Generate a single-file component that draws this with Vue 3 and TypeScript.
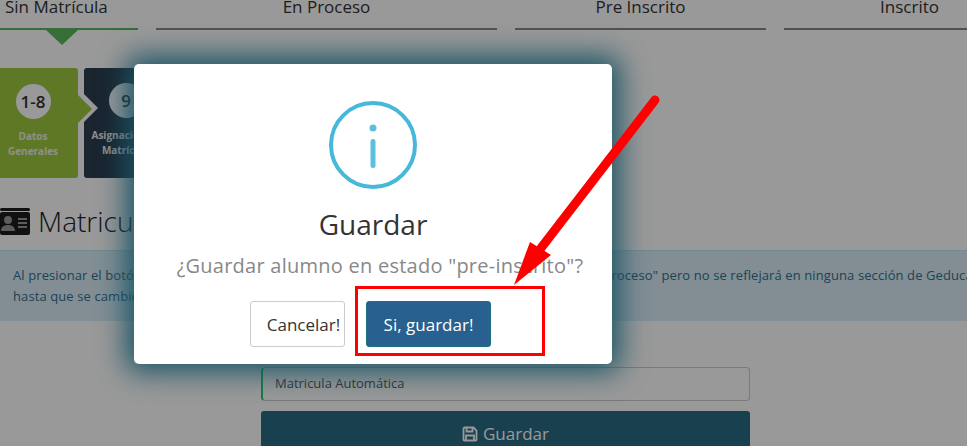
<script setup lang="ts">
interface Tab {
  label: string
  width: number
  active?: boolean
}

const tabs: Tab[] = [
  { label: 'Sin Matrícula', width: 138, active: true },
  { label: 'En Proceso', width: 341 },
  { label: 'Pre Inscrito', width: 251 },
  { label: 'Inscrito', width: 251 }
]
</script>

<template>
  <div class="page">
    <div class="tabs">
      <div v-for="tab in tabs" :key="tab.label" class="tab" :class="{ active: tab.active }" :style="{ flexBasis: `${tab.width}px` }">
        <span class="tab-label">{{ tab.label }}</span>
      </div>
    </div>

    <div class="steps">
      <div class="step green">
        <span class="num">1-8</span>
        <span class="cap">Datos<br />Generales</span>
      </div>
      <div class="step dark">
        <span class="num">9</span>
        <span class="cap">Asignación de<br />Matrícula</span>
      </div>
    </div>

    <h2 class="heading">
      <svg class="id-icon" viewBox="0 0 30 27" width="30" height="27">
        <rect x="0" y="0" width="30" height="3" rx="1.5" fill="#1c1c1c" />
        <path fill="#1c1c1c" d="M2 4h26a2 2 0 0 1 2 2v19a2 2 0 0 1-2 2H2a2 2 0 0 1-2-2V6a2 2 0 0 1 2-2z" />
        <circle cx="8" cy="12" r="4" fill="#999" />
        <path fill="#999" d="M1 23c0-4 3-6 7-6s7 2 7 6z" />
        <rect x="18" y="10" width="9" height="2" fill="#999" />
        <rect x="18" y="14" width="9" height="2" fill="#999" />
        <rect x="18" y="18" width="9" height="2" fill="#999" />
      </svg>
      Matricula
    </h2>

    <div class="alert">
      Al presionar el botón Guardar el alumno quedará en estado "Pre Inscrito" y pasará a estado "En Proceso" pero no se reflejará en ninguna sección de Geduca<br />
      hasta que se cambie su estado a "Inscrito".
    </div>

    <div class="form">
      <input class="field" value="Matricula Automática" readonly />
      <button class="save">
        <svg viewBox="0 0 16 16" width="16" height="16" fill="none" stroke="currentColor" stroke-width="1.8">
          <path d="M1.5 2.5a1 1 0 0 1 1-1h9l3 3v9a1 1 0 0 1-1 1h-11a1 1 0 0 1-1-1z" />
          <path d="M4.5 1.5v4h6v-4" />
          <path d="M4 14.5v-5h8v5" />
        </svg>
        Guardar
      </button>
    </div>

    <div class="backdrop"></div>

    <div class="modal">
      <svg class="info" viewBox="0 0 88 88" width="88" height="88">
        <circle cx="44" cy="44" r="42" fill="none" stroke="#46b8da" stroke-width="4" />
        <circle cx="44" cy="27" r="3.5" fill="#5bc0de" />
        <rect x="41.5" y="38" width="5" height="29" rx="2.5" fill="#5bc0de" />
      </svg>
      <h3 class="title">Guardar</h3>
      <p class="msg">¿Guardar alumno en estado "pre-inscrito"?</p>
      <div class="actions">
        <button class="btn cancel">Cancelar!</button>
        <button class="btn ok">Si, guardar!</button>
      </div>
    </div>

    <svg class="annot" viewBox="0 0 967 446" width="967" height="446">
      <rect x="356.5" y="287.5" width="187" height="67" fill="none" stroke="#f00" stroke-width="3" />
      <path d="M655 100 L541 248" stroke="#f00" stroke-width="9" stroke-linecap="round" fill="none" />
      <path d="M514 285 L530 242 L551 255 Z" fill="#f00" />
    </svg>
  </div>
</template>

<style scoped>
.page {
  position: relative;
  width: 967px;
  height: 446px;
  overflow: hidden;
  background: #fff;
  font-family: "Open Sans", "Noto Sans", sans-serif;
  color: #333;
}

.tabs {
  display: flex;
  gap: 18px;
  height: 30px;
  width: 1100px;
}
.tab {
  flex: none;
  height: 30px;
  border-bottom: 2px solid #888;
  box-sizing: border-box;
  text-align: center;
  font-size: 17px;
  line-height: 14px;
  color: #333;
  position: relative;
}
.tab.active {
  border-bottom-color: #5cb85c;
  text-align: left;
  padding-left: 5px;
}
.tab.active::after {
  content: '';
  position: absolute;
  left: 46px;
  top: 30px;
  border-left: 16px solid transparent;
  border-right: 16px solid transparent;
  border-top: 15px solid #5cb85c;
}

.steps {
  display: flex;
  gap: 6px;
  margin-top: 38px;
  height: 110px;
  isolation: isolate;
}
.step {
  width: 78px;
  height: 110px;
  border-radius: 0 3px 3px 0;
  position: relative;
  display: flex;
  flex-direction: column;
  align-items: center;
  color: #fff;
  box-sizing: border-box;
  padding-top: 16px;
}
.step.green {
  background: #9dc83f;
  padding-right: 12px;
}
.step.dark {
  background: #2c3e50;
  width: 120px;
  border-radius: 3px;
  padding-right: 36px;
  padding-top: 15px;
}
/* arrow of the first step, with the notch it cuts in the next one */
.step.green::after {
  content: '';
  position: absolute;
  left: 100%;
  top: 27px;
  border-top: 14px solid transparent;
  border-bottom: 14px solid transparent;
  border-left: 14px solid #9dc83f;
  z-index: 2;
}
.step.dark::before {
  content: '';
  position: absolute;
  left: 0;
  top: 26px;
  border-top: 14.5px solid transparent;
  border-bottom: 14.5px solid transparent;
  border-left: 14px solid #fff;
}
.num {
  width: 35px;
  height: 35px;
  border-radius: 50%;
  background: #fff;
  color: #333;
  font-size: 17px;
  font-weight: 600;
  display: flex;
  align-items: center;
  justify-content: center;
}
.cap {
  margin-top: 10px;
  font-size: 10px;
  font-weight: 700;
  line-height: 15px;
  text-align: center;
  color: #eee;
  white-space: nowrap;
}

.heading {
  margin: 23px 0 0;
  display: flex;
  align-items: center;
  gap: 8px;
  height: 40px;
  font-size: 28px;
  font-weight: 300;
  color: #222;
}

.alert {
  margin-top: 9px;
  height: 71px;
  box-sizing: border-box;
  padding: 14px 13px;
  background: #d9edf7;
  border-top: 1px solid #bce8f1;
  color: #31708f;
  font-size: 13px;
  letter-spacing: 0.1px;
  line-height: 21px;
  white-space: nowrap;
}

.form {
  width: 489px;
  margin: 46px 0 0 261px;
  display: flex;
  flex-direction: column;
  gap: 10px;
}
.field {
  height: 34px;
  box-sizing: border-box;
  border: 1px solid #ccc;
  border-left: 2px solid #2ecc71;
  border-radius: 4px;
  padding: 0 12px 2px;
  font: 13px "Open Sans", sans-serif;
  color: #555;
  background: #fff;
}
.save {
  height: 45px;
  border: none;
  border-radius: 3px;
  background: #2b6b84;
  color: #fff;
  font: 17px "Open Sans", sans-serif;
  display: flex;
  justify-content: center;
  align-items: center;
  gap: 5px;
  padding: 0;
}

.backdrop {
  position: absolute;
  inset: 0;
  background: rgba(0, 0, 0, 0.4);
}

.modal {
  position: absolute;
  left: 134px;
  top: 64px;
  width: 478px;
  height: 300px;
  border-radius: 5px;
  background: #fff;
  box-shadow: 0 0 28px 8px #1b5566;
  display: flex;
  flex-direction: column;
  align-items: center;
  padding-top: 37px;
  box-sizing: border-box;
}
.title {
  margin: 17px 0 0;
  font-size: 28px;
  line-height: 36px;
  font-weight: 400;
  color: #333;
}
.msg {
  margin: 11px 0 0 14px;
  font-size: 20px;
  letter-spacing: 0.25px;
  line-height: 26px;
  color: #888;
  white-space: nowrap;
}
.actions {
  display: flex;
  gap: 21px;
  margin-top: 22px;
  margin-right: 5px;
}
.btn {
  height: 46px;
  border-radius: 3px;
  font: 17px "Open Sans", sans-serif;
  box-sizing: border-box;
  padding: 0;
}
.cancel {
  width: 95px;
  background: #fff;
  border: 1px solid #ccc;
  color: #333;
  padding-left: 12px;
}
.ok {
  width: 125px;
  background: #286090;
  border: 1px solid #1f6f80;
  color: #fff;
}

.annot {
  position: absolute;
  left: 0;
  top: 0;
}
</style>
